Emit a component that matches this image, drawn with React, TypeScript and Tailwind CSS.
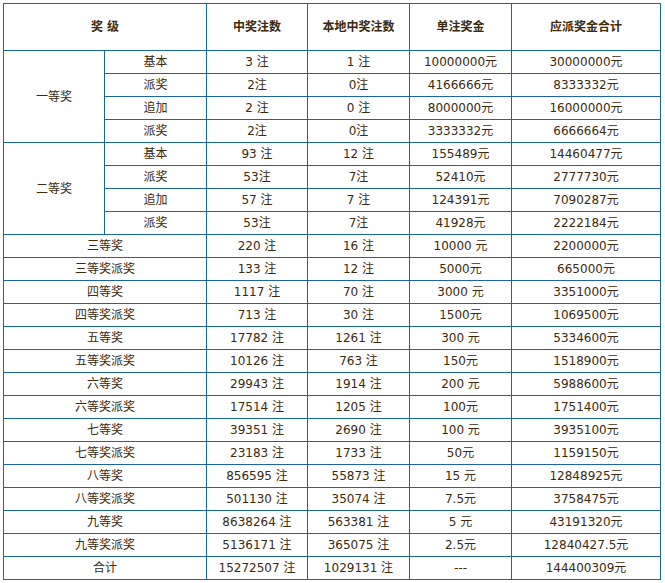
type Row = [string, string, string, string, string];

const first: Row[] = [
  ['基本', '3 注', '1 注', '10000000元', '30000000元'],
  ['派奖', '2注', '0注', '4166666元', '8333332元'],
  ['追加', '2 注', '0 注', '8000000元', '16000000元'],
  ['派奖', '2注', '0注', '3333332元', '6666664元'],
];

const second: Row[] = [
  ['基本', '93 注', '12 注', '155489元', '14460477元'],
  ['派奖', '53注', '7注', '52410元', '2777730元'],
  ['追加', '57 注', '7 注', '124391元', '7090287元'],
  ['派奖', '53注', '7注', '41928元', '2222184元'],
];

const rest: Row[] = [
  ['三等奖', '220 注', '16 注', '10000 元', '2200000元'],
  ['三等奖派奖', '133 注', '12 注', '5000元', '665000元'],
  ['四等奖', '1117 注', '70 注', '3000 元', '3351000元'],
  ['四等奖派奖', '713 注', '30 注', '1500元', '1069500元'],
  ['五等奖', '17782 注', '1261 注', '300 元', '5334600元'],
  ['五等奖派奖', '10126 注', '763 注', '150元', '1518900元'],
  ['六等奖', '29943 注', '1914 注', '200 元', '5988600元'],
  ['六等奖派奖', '17514 注', '1205 注', '100元', '1751400元'],
  ['七等奖', '39351 注', '2690 注', '100 元', '3935100元'],
  ['七等奖派奖', '23183 注', '1733 注', '50元', '1159150元'],
  ['八等奖', '856595 注', '55873 注', '15 元', '12848925元'],
  ['八等奖派奖', '501130 注', '35074 注', '7.5元', '3758475元'],
  ['九等奖', '8638264 注', '563381 注', '5 元', '43191320元'],
  ['九等奖派奖', '5136171 注', '365075 注', '2.5元', '12840427.5元'],
  ['合计', '15272507 注', '1029131 注', '---', '144400309元'],
];

const cell = 'bg-white flex items-center justify-center whitespace-pre';

function Group({ label, rows }: { label: string; rows: Row[] }) {
  return (
    <>
      <div className={`${cell} row-span-4`}>{label}</div>
      {rows.map((r, i) =>
        r.map((v, j) => (
          <div key={`${i}-${j}`} className={cell}>
            {v}
          </div>
        ))
      )}
    </>
  );
}

export default function App() {
  return (
    <div className="bg-white min-h-[583px] pt-[3px] pl-[3px]">
      <div
        className="inline-grid grid-cols-[100px_101px_100px_101px_101px_148px] grid-rows-[46px_repeat(23,22px)] gap-px p-px bg-[#1a679e] text-[12px] leading-none text-[#3b2a0e]"
        style={{ fontFamily: '"DejaVu Sans", "Noto Sans CJK SC", sans-serif' }}
      >
        <div className={`${cell} col-span-2 font-bold`}>奖 级</div>
        <div className={`${cell} font-bold`}>中奖注数</div>
        <div className={`${cell} font-bold`}>本地中奖注数</div>
        <div className={`${cell} font-bold`}>单注奖金</div>
        <div className={`${cell} font-bold`}>应派奖金合计</div>

        <Group label="一等奖" rows={first} />
        <Group label="二等奖" rows={second} />

        {rest.map((r, i) => (
          <div key={i} className="contents">
            <div className={`${cell} col-span-2`}>{r[0]}</div>
            <div className={cell}>{r[1]}</div>
            <div className={cell}>{r[2]}</div>
            <div className={cell}>{r[3]}</div>
            <div className={cell}>{r[4]}</div>
          </div>
        ))}
      </div>
    </div>
  );
}
